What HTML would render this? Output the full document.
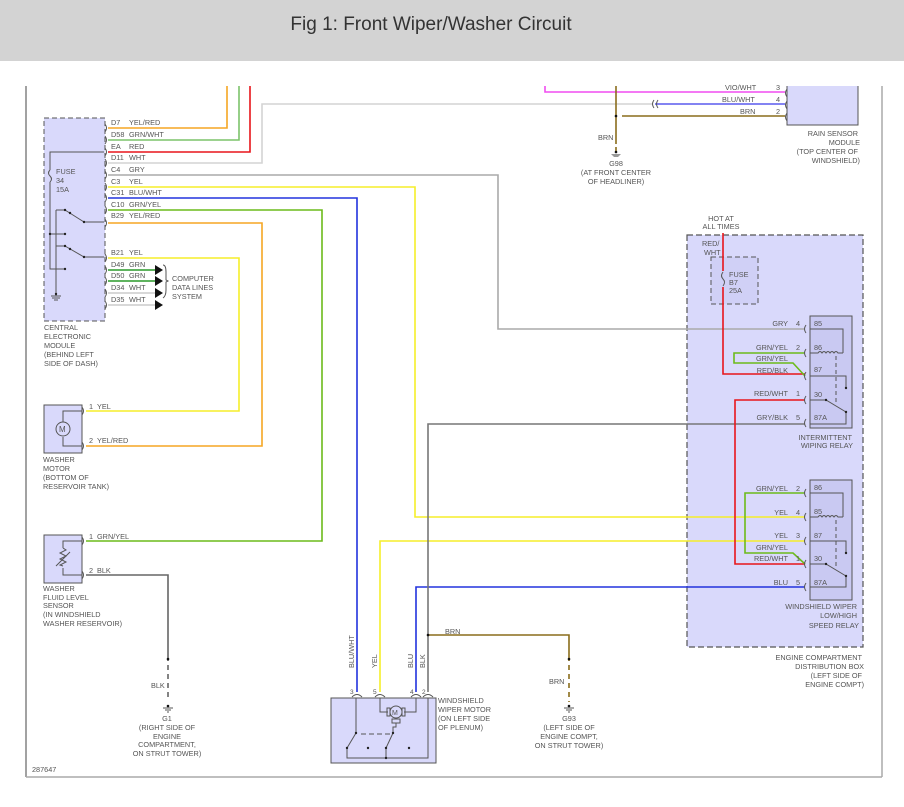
<!DOCTYPE html>
<html><head><meta charset="utf-8"><style>
html,body{margin:0;padding:0;background:#fff;width:904px;height:807px;overflow:hidden}
.hd{position:absolute;left:0;top:0;width:904px;height:61px;background:#d3d3d3}
.hd div{position:absolute;left:0;width:862px;top:14px;text-align:center;font:19px "Liberation Sans",sans-serif;color:#333;letter-spacing:0px}
svg{position:absolute;left:0;top:0}
text{font-family:"Liberation Sans",sans-serif;font-size:7.3px;fill:#555}
.w{fill:none;stroke-width:1.6}
.k{fill:none;stroke:#555;stroke-width:1}
</style></head><body>
<div class="hd"><div>Fig 1: Front Wiper/Washer Circuit</div></div>
<svg width="904" height="807" viewBox="0 0 904 807">
<!-- frame -->
<line x1="26" y1="86" x2="26" y2="777" stroke="#444" stroke-width="1"/>
<line x1="26" y1="777" x2="882" y2="777" stroke="#aaa" stroke-width="1.5"/>
<line x1="882" y1="86" x2="882" y2="777" stroke="#aaa" stroke-width="1.5"/>

<!-- boxes -->
<rect x="44" y="118" width="61" height="203" fill="#d9d9fb" stroke="#555" stroke-dasharray="5,3"/>
<rect x="687" y="235" width="176" height="412" fill="#d9d9fb" stroke="#555" stroke-width="1.2" stroke-dasharray="6,3"/>
<rect x="711" y="257" width="47" height="47" fill="#d0d0f6" stroke="#555" stroke-dasharray="5,3"/>
<rect x="810" y="316" width="42" height="112" fill="#c9c9f2" stroke="#555"/>
<rect x="810" y="480" width="42" height="120" fill="#c9c9f2" stroke="#555"/>
<rect x="787" y="80" width="71" height="45" fill="#d9d9fb" stroke="#555"/>
<rect x="44" y="405" width="38" height="48" fill="#d9d9fb" stroke="#555"/>
<rect x="44" y="535" width="38" height="48" fill="#d9d9fb" stroke="#555"/>
<rect x="331" y="698" width="105" height="65" fill="#d9d9fb" stroke="#555"/>
<rect x="0" y="61" width="904" height="25" fill="#fff"/>

<!-- CEM wires -->
<polyline class="w" stroke="#f5a623" points="108,128 227,128 227,86"/>
<polyline class="w" stroke="#7cc36a" points="108,140 239,140 239,86"/>
<polyline class="w" stroke="#e8151b" points="108,152 250,152 250,86"/>
<polyline class="w" stroke="#d4d4d4" points="108,163 262,163 262,104 652,104"/>
<polyline class="w" stroke="#aaa" points="108,175 498,175 498,329 805,329"/>
<polyline class="w" stroke="#f5ee2a" points="108,187 415,187 415,517 805,517"/>
<polyline class="w" stroke="#2233dd" points="108,198 357,198 357,692"/>
<polyline class="w" stroke="#6cbb1a" points="108,210 322,210 322,541 86,541"/>
<polyline class="w" stroke="#f5a623" points="108,223 262,223 262,446 86,446"/>
<polyline class="w" stroke="#f5ee2a" points="108,258 239,258 239,411 86,411"/>
<g class="w"><line x1="108" y1="270" x2="155" y2="270" stroke="#2a9a2a"/><line x1="108" y1="281" x2="155" y2="281" stroke="#2a9a2a"/><line x1="108" y1="293" x2="155" y2="293" stroke="#ccc"/><line x1="108" y1="305" x2="155" y2="305" stroke="#ccc"/></g>
<g fill="#111"><path d="M155,265 l8,5 l-8,5z"/><path d="M155,276 l8,5 l-8,5z"/><path d="M155,288 l8,5 l-8,5z"/><path d="M155,300 l8,5 l-8,5z"/></g>
<path class="k" d="M163,265 q3,0 3,7 v8 l2,1 l-2,1 v8 q0,6 -3,8"/>
<!-- connector marks on CEM -->
<g class="k"><path d="M105,124 q3,4 0,8 M105,136 q3,4 0,8 M105,148 q3,4 0,8 M105,159 q3,4 0,8 M105,171 q3,4 0,8 M105,183 q3,4 0,8 M105,194 q3,4 0,8 M105,206 q3,4 0,8 M105,219 q3,4 0,8 M105,254 q3,4 0,8 M105,266 q3,4 0,8 M105,277 q3,4 0,8 M105,289 q3,4 0,8 M105,301 q3,4 0,8"/></g>
<!-- CEM internals -->
<g class="k"><polyline points="104,152 50,152 50,170"/><path d="M50,170 q-3,3 0,6 q3,3 0,6"/><polyline points="50,182 50,269 65,269"/><line x1="50" y1="234" x2="65" y2="234"/><line x1="56" y1="210" x2="56" y2="296"/><line x1="56" y1="210" x2="65" y2="210"/><line x1="65" y1="210" x2="84" y2="222"/><line x1="84" y1="222" x2="104" y2="222"/><line x1="56" y1="246" x2="65" y2="246"/><line x1="65" y1="246" x2="84" y2="257"/><line x1="84" y1="257" x2="104" y2="257"/><line x1="51" y1="296" x2="61" y2="296"/><line x1="52" y1="298" x2="60" y2="298"/><line x1="54" y1="300" x2="58" y2="300"/></g>
<g fill="#222"><circle cx="65" cy="210" r="1.2"/><circle cx="70" cy="213" r="1.2"/><circle cx="84" cy="222" r="1.2"/><circle cx="50" cy="234" r="1.2"/><circle cx="65" cy="234" r="1.2"/><circle cx="65" cy="246" r="1.2"/><circle cx="70" cy="249" r="1.2"/><circle cx="84" cy="257" r="1.2"/><circle cx="65" cy="269" r="1.2"/><circle cx="56" cy="294" r="1.2"/></g>
<g>
<text x="111" y="125">D7</text><text x="129" y="125">YEL/RED</text>
<text x="111" y="137">D58</text><text x="129" y="137">GRN/WHT</text>
<text x="111" y="149">EA</text><text x="129" y="149">RED</text>
<text x="111" y="160">D11</text><text x="129" y="160">WHT</text>
<text x="111" y="172">C4</text><text x="129" y="172">GRY</text>
<text x="111" y="184">C3</text><text x="129" y="184">YEL</text>
<text x="111" y="195">C31</text><text x="129" y="195">BLU/WHT</text>
<text x="111" y="207">C10</text><text x="129" y="207">GRN/YEL</text>
<text x="111" y="218">B29</text><text x="129" y="218">YEL/RED</text>
<text x="111" y="255">B21</text><text x="129" y="255">YEL</text>
<text x="111" y="267">D49</text><text x="129" y="267">GRN</text>
<text x="111" y="278">D50</text><text x="129" y="278">GRN</text>
<text x="111" y="290">D34</text><text x="129" y="290">WHT</text>
<text x="111" y="302">D35</text><text x="129" y="302">WHT</text>
<text x="172" y="281">COMPUTER</text><text x="172" y="290">DATA LINES</text><text x="172" y="299">SYSTEM</text>
<text x="56" y="174">FUSE</text><text x="56" y="183">34</text><text x="56" y="192">15A</text>
<text x="44" y="330">CENTRAL</text><text x="44" y="339">ELECTRONIC</text><text x="44" y="348">MODULE</text><text x="44" y="357">(BEHIND LEFT</text><text x="44" y="366">SIDE OF DASH)</text>
</g>

<!-- washer motor -->
<g class="k"><path d="M82,407 q3,4 0,8 M82,442 q3,4 0,8 M82,537 q3,4 0,8 M82,571 q3,4 0,8"/><polyline points="82,411 63,411 63,422"/><polyline points="82,446 63,446 63,437"/><circle cx="63" cy="429" r="7"/><polyline points="82,541 63,541 63,548"/><polyline points="82,575 63,575 63,568"/><path d="M63,548 l3,2 -6,3 6,3 -6,3 6,3 -6,3 3,1"/><line x1="56" y1="566" x2="70" y2="552"/></g>
<text x="59" y="432" style="font-size:8px">M</text>
<text x="89" y="409">1</text><text x="97" y="409">YEL</text>
<text x="89" y="443">2</text><text x="97" y="443">YEL/RED</text>
<text x="43" y="462">WASHER</text><text x="43" y="471">MOTOR</text><text x="43" y="480">(BOTTOM OF</text><text x="43" y="489">RESERVOIR TANK)</text>
<text x="89" y="539">1</text><text x="97" y="539">GRN/YEL</text>
<text x="89" y="573">2</text><text x="97" y="573">BLK</text>
<text x="43" y="591">WASHER</text><text x="43" y="600">FLUID LEVEL</text><text x="43" y="608">SENSOR</text><text x="43" y="617">(IN WINDSHIELD</text><text x="43" y="626">WASHER RESERVOIR)</text>
<polyline class="w" stroke="#666" points="86,575 168,575 168,656"/>
<line x1="168" y1="656" x2="168" y2="700" stroke="#666" stroke-width="1.6" stroke-dasharray="5,4"/>
<circle cx="168" cy="659" r="1.3" fill="#111"/><circle cx="168" cy="706" r="1.3" fill="#111"/>
<g class="k"><line x1="163" y1="708" x2="173" y2="708"/><line x1="165" y1="710" x2="171" y2="710"/><line x1="167" y1="712" x2="169" y2="712"/></g>
<text x="151" y="688">BLK</text>
<g text-anchor="middle"><text x="167" y="721">G1</text><text x="167" y="730">(RIGHT SIDE OF</text><text x="167" y="739">ENGINE</text><text x="167" y="747">COMPARTMENT,</text><text x="167" y="756">ON STRUT TOWER)</text></g>
<text x="32" y="772">287647</text>

<!-- wiper motor wires -->
<polyline class="w" stroke="#f5ee2a" points="380,692 380,541 805,541"/>
<polyline class="w" stroke="#2233dd" points="416,692 416,587 805,587"/>
<polyline class="w" stroke="#777" points="428,692 428,424 805,424"/>
<polyline class="w" stroke="#8a6d1c" points="428,635 569,635 569,656"/>
<line x1="569" y1="656" x2="569" y2="702" stroke="#8a6d1c" stroke-width="1.6" stroke-dasharray="5,4"/>
<circle cx="428" cy="635" r="1.3" fill="#111"/><circle cx="569" cy="659" r="1.3" fill="#111"/><circle cx="569" cy="706" r="1.3" fill="#111"/>
<g class="k"><line x1="564" y1="708" x2="574" y2="708"/><line x1="566" y1="710" x2="572" y2="710"/><line x1="568" y1="712" x2="570" y2="712"/></g>
<text x="445" y="634">BRN</text><text x="549" y="684">BRN</text>
<g text-anchor="middle"><text x="569" y="721">G93</text><text x="569" y="730">(LEFT SIDE OF</text><text x="569" y="739">ENGINE COMPT,</text><text x="569" y="748">ON STRUT TOWER)</text></g>
<g transform="rotate(-90)"><text x="-668" y="354">BLU/WHT</text><text x="-668" y="377">YEL</text><text x="-668" y="413">BLU</text><text x="-668" y="425">BLK</text></g>
<g class="k"><path d="M352,697 q5,-5 10,0 M375,697 q5,-5 10,0 M411,697 q5,-5 10,0 M423,697 q5,-5 10,0"/>
<polyline points="356,698 356,733 347,748 347,758 428,758 428,698"/>
<polyline points="380,698 380,712 388,712"/><polyline points="416,698 416,712 404,712"/>
<circle cx="396" cy="712" r="6"/><rect x="387" y="708" width="3" height="8"/><rect x="402" y="708" width="3" height="8"/>
<rect x="392" y="719" width="8" height="4"/>
<polyline points="396,723 396,727 393,727 393,733 386,748 386,758"/>
<line x1="361" y1="734" x2="392" y2="734" stroke-dasharray="5,3"/></g>
<text x="392" y="715" style="font-size:7px">M</text>
<g fill="#222"><circle cx="368" cy="748" r="1.2"/><circle cx="409" cy="748" r="1.2"/><circle cx="356" cy="733" r="1.2"/><circle cx="393" cy="733" r="1.2"/><circle cx="347" cy="748" r="1.2"/><circle cx="386" cy="748" r="1.2"/><circle cx="386" cy="758" r="1.2"/></g>
<text x="350" y="694" style="font-size:6.5px">3</text><text x="373" y="694" style="font-size:6.5px">5</text><text x="410" y="694" style="font-size:6.5px">4</text><text x="422" y="694" style="font-size:6.5px">2</text>
<text x="438" y="703">WINDSHIELD</text><text x="438" y="712">WIPER MOTOR</text><text x="438" y="721">(ON LEFT SIDE</text><text x="438" y="730">OF PLENUM)</text>

<!-- top right -->
<polyline class="w" stroke="#f04cf0" points="545,86 545,92 785,92"/>
<line x1="655" y1="104" x2="785" y2="104" stroke="#5a5aee" stroke-width="1.6"/>
<path class="k" d="M654,100 q-3,4 0,8 M658,100 q-3,4 0,8"/>
<line x1="616" y1="86" x2="616" y2="140" stroke="#8a6d1c" stroke-width="1.6"/>
<line x1="616" y1="140" x2="616" y2="152" stroke="#8a6d1c" stroke-width="1.6" stroke-dasharray="4,3"/>
<line x1="622" y1="116" x2="785" y2="116" stroke="#8a6d1c" stroke-width="1.6"/>
<circle cx="616" cy="116" r="1.3" fill="#111"/><circle cx="616" cy="152" r="1.3" fill="#111"/>
<path d="M611,154 h10 l-3,3 h-4z" fill="#999"/>
<g class="k"><path d="M787,89 q-3,4 0,8 M787,101 q-3,4 0,8 M787,113 q-3,4 0,8"/></g>
<text x="725" y="90" >VIO/WHT</text><text x="776" y="90">3</text>
<text x="722" y="102">BLU/WHT</text><text x="776" y="102">4</text>
<text x="740" y="114">BRN</text><text x="776" y="114">2</text>
<text x="598" y="140">BRN</text>
<g text-anchor="middle"><text x="616" y="166">G98</text><text x="616" y="175">(AT FRONT CENTER</text><text x="616" y="184">OF HEADLINER)</text></g>
<g text-anchor="end"><text x="858" y="136">RAIN SENSOR</text><text x="860" y="145">MODULE</text><text x="858" y="154">(TOP CENTER OF</text><text x="860" y="163">WINDSHIELD)</text></g>

<!-- engine box -->
<g text-anchor="middle"><text x="721" y="221">HOT AT</text><text x="721" y="229">ALL TIMES</text></g>
<text x="702" y="246">RED/</text><text x="704" y="255">WHT</text>
<polyline class="w" stroke="#e8151b" points="723,235 723,374 805,374" />
<line x1="723" y1="233" x2="723" y2="235" stroke="#e8151b" stroke-width="1.6"/>
<rect x="720" y="271" width="6" height="16" fill="#d0d0f6"/>
<path class="k" d="M723,272 q-3,4 0,7 q3,3 0,7"/>
<text x="729" y="277">FUSE</text><text x="729" y="285">B7</text><text x="729" y="293">25A</text>
<polyline class="w" stroke="#e8151b" stroke-width="1.2" points="805,400 735,400 735,564 805,564"/>
<polyline class="w" stroke="#6cbb1a" stroke-width="1.2" points="805,353 734,353 734,363 793,363 805,376"/>
<polyline class="w" stroke="#6cbb1a" stroke-width="1.2" points="805,493 745,493 745,553 793,553 805,564"/>
<g text-anchor="end">
<text x="788" y="326">GRY</text><text x="800" y="326">4</text>
<text x="788" y="350">GRN/YEL</text><text x="800" y="350">2</text>
<text x="788" y="361">GRN/YEL</text>
<text x="788" y="373">RED/BLK</text>
<text x="788" y="396">RED/WHT</text><text x="800" y="396">1</text>
<text x="788" y="420">GRY/BLK</text><text x="800" y="420">5</text>
<text x="788" y="491">GRN/YEL</text><text x="800" y="491">2</text>
<text x="788" y="515">YEL</text><text x="800" y="515">4</text>
<text x="788" y="538">YEL</text><text x="800" y="538">3</text>
<text x="788" y="550">GRN/YEL</text>
<text x="788" y="561">RED/WHT</text><text x="800" y="561">1</text>
<text x="788" y="585">BLU</text><text x="800" y="585">5</text>
<text x="852" y="440">INTERMITTENT</text><text x="853" y="448">WIPING RELAY</text>
<text x="857" y="609">WINDSHIELD WIPER</text><text x="857" y="618">LOW/HIGH</text><text x="859" y="628">SPEED RELAY</text>
<text x="862" y="660">ENGINE COMPARTMENT</text><text x="864" y="669">DISTRIBUTION BOX</text><text x="862" y="678">(LEFT SIDE OF</text><text x="864" y="687">ENGINE COMPT)</text>
</g>
<g>
<text x="814" y="326">85</text><text x="814" y="350">86</text><text x="814" y="372">87</text><text x="814" y="397">30</text><text x="814" y="420">87A</text>
<text x="814" y="490">86</text><text x="814" y="514">85</text><text x="814" y="538">87</text><text x="814" y="561">30</text><text x="814" y="585">87A</text>
</g>
<!-- relay internals -->
<g class="k">
<path d="M806,325 q-3,4 0,8 M806,349 q-3,4 0,8 M806,372 q-3,4 0,8 M806,396 q-3,4 0,8 M806,419 q-3,4 0,8"/>
<path d="M810,329 h33 v24 M810,353 h8 q2,-3 4,0 q2,-3 4,0 q2,-3 4,0 q2,-3 4,0 q2,-3 4,0 h5 M810,376 h36 v12 M810,400 h16 l20,12 M810,424 h36 v-12"/>
<line x1="836" y1="356" x2="836" y2="403" stroke-dasharray="4,3"/>
<path d="M806,489 q-3,4 0,8 M806,513 q-3,4 0,8 M806,537 q-3,4 0,8 M806,560 q-3,4 0,8 M806,583 q-3,4 0,8"/>
<path d="M810,493 h33 v24 M810,517 h8 q2,-3 4,0 q2,-3 4,0 q2,-3 4,0 q2,-3 4,0 q2,-3 4,0 h5 M810,541 h36 v12 M810,564 h16 l20,12 M810,587 h36 v-12"/>
<line x1="836" y1="520" x2="836" y2="567" stroke-dasharray="4,3"/>
</g>
<g fill="#222"><circle cx="846" cy="388" r="1.2"/><circle cx="846" cy="412" r="1.2"/><circle cx="826" cy="400" r="1.2"/><circle cx="846" cy="553" r="1.2"/><circle cx="846" cy="576" r="1.2"/><circle cx="826" cy="564" r="1.2"/></g>
</svg>
</body></html>
